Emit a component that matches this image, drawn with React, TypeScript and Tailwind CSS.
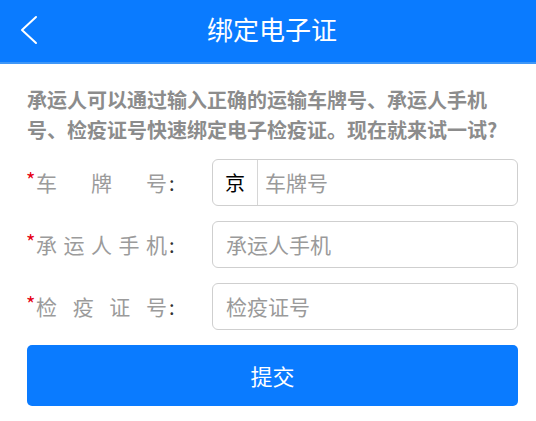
import React from "react";

const FONT = { fontFamily: '"Noto Sans CJK SC", "Noto Sans", sans-serif' };

function Label({ chars }: { chars: string[] }) {
  return (
    <div className="flex items-center w-[185px] shrink-0">
      <span className="w-[9px] self-start mt-[3px] text-[20px] leading-none text-[#e60012] -ml-[1px]">*</span>
      <div className="flex justify-between w-[131px] ml-[1px] text-[21px] text-[#9b9b9b]">
        {chars.map((c, i) => (
          <span key={i}>{c}</span>
        ))}
      </div>
      <span className="text-[20px] text-[#333] ml-[2px]">:</span>
    </div>
  );
}

export default function App() {
  return (
    <div className="w-[536px] h-[421px] bg-white overflow-hidden" style={FONT}>
      <div className="relative h-[64px] bg-[#0a7bff] border-b-2 border-[#3f97f7] flex items-center justify-center">
        <svg className="absolute left-[18px] top-[15px]" width="22" height="30" viewBox="0 0 22 30">
          <polyline points="18,2 4,15 18,28" fill="none" stroke="#fff" strokeWidth="2" strokeLinecap="round" strokeLinejoin="round" />
        </svg>
        <span className="text-white text-[26px] leading-none -mt-[4px] ml-[8px]">绑定电子证</span>
      </div>

      <p className="pl-[27px] w-[503px] pt-[21px] text-[20px] leading-[30px] font-bold text-[#8c8c8c]">
        承运人可以通过输入正确的运输车牌号、承运人手机号、检疫证号快速绑定电子检疫证。现在就来试一试?
      </p>

      <div className="mt-[14px] pl-[27px] pr-[18px] flex flex-col gap-[15px]">
        <div className="flex items-center">
          <Label chars={["车", "牌", "号"]} />
          <div className="flex-1 h-[47px] border border-[#cfcfcf] rounded-[6px] flex items-center">
            <span className="w-[45px] h-full flex items-center justify-center border-r border-[#d6d6d6] text-[20px] text-black">京</span>
            <span className="pl-[7px] text-[21px] text-[#9a9a9a]">车牌号</span>
          </div>
        </div>
        <div className="flex items-center">
          <Label chars={["承", "运", "人", "手", "机"]} />
          <div className="flex-1 h-[47px] border border-[#cfcfcf] rounded-[6px] flex items-center pl-[13px] text-[21px] text-[#9a9a9a]">
            承运人手机
          </div>
        </div>
        <div className="flex items-center">
          <Label chars={["检", "疫", "证", "号"]} />
          <div className="flex-1 h-[47px] border border-[#cfcfcf] rounded-[6px] flex items-center pl-[13px] text-[21px] text-[#9a9a9a]">
            检疫证号
          </div>
        </div>
        <button className="h-[61px] w-full bg-[#0a7bff] rounded-[5px] text-white text-[22px]">提交</button>
      </div>
    </div>
  );
}
